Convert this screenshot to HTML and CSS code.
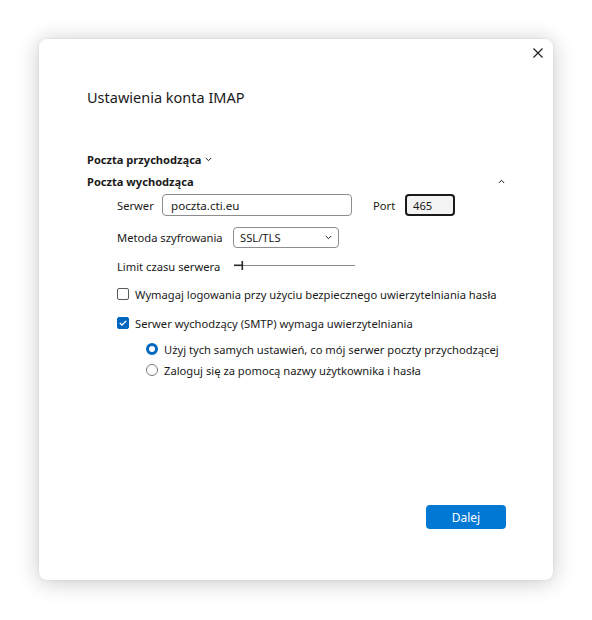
FILE: index.html
```html
<!DOCTYPE html>
<html lang="pl">
<head>
<meta charset="utf-8">
<title>Ustawienia konta IMAP</title>
<link rel="stylesheet" href="styles.css">
</head>
<body>
<div class="dialog">
  <div class="topbar">
    <span class="close" aria-label="Zamknij">
      <svg width="10" height="10" viewBox="0 0 10 10"><path d="M0.5 0.5 L9.5 9.5 M9.5 0.5 L0.5 9.5" stroke="#1a1a1a" stroke-width="1.1" fill="none"/></svg>
    </span>
  </div>
  <h1 class="title">Ustawienia konta IMAP</h1>

  <div class="sec sec-first">
    <span class="sec-label">Poczta przychodząca</span>
    <svg class="chev-down" width="7" height="5" viewBox="0 0 7 5"><path d="M0.8 1 L3.5 3.7 L6.2 1" stroke="#1a1a1a" stroke-width="1" fill="none"/></svg>
  </div>
  <div class="sec sec-second">
    <span class="sec-label">Poczta wychodząca</span>
    <svg class="chev-up" width="7" height="5" viewBox="0 0 7 5"><path d="M0.8 4 L3.5 1.3 L6.2 4" stroke="#1a1a1a" stroke-width="1" fill="none"/></svg>
  </div>

  <div class="fields">
    <div class="row row-server">
      <span class="lbl lbl-server">Serwer</span>
      <span class="input input-server">poczta.cti.eu</span>
      <span class="lbl lbl-port">Port</span>
      <span class="input input-port">465</span>
    </div>
    <div class="row row-method">
      <span class="lbl lbl-method">Metoda szyfrowania</span>
      <span class="select">
        <span>SSL/TLS</span>
        <svg width="7" height="5" viewBox="0 0 7 5"><path d="M0.8 1 L3.5 3.7 L6.2 1" stroke="#1a1a1a" stroke-width="1" fill="none"/></svg>
      </span>
    </div>
    <div class="row row-limit">
      <span class="lbl lbl-limit">Limit czasu serwera</span>
      <svg class="slider" width="121" height="9" viewBox="0 0 121 9"><rect x="0" y="3.5" width="8" height="1.6" fill="#2a2a2a"/><rect x="8" y="4" width="113" height="1" fill="#8a8a8a"/><rect x="7.5" y="0" width="1.6" height="9" fill="#2a2a2a"/></svg>
    </div>
    <label class="row check-row cb1">
      <span class="checkbox"></span>
      <span>Wymagaj logowania przy użyciu bezpiecznego uwierzytelniania hasła</span>
    </label>
    <label class="row check-row cb2">
      <span class="checkbox checked">
        <svg width="8" height="6" viewBox="0 0 8 6"><path d="M0.8 3 L3 5 L7.2 0.9" stroke="#fff" stroke-width="1.3" fill="none"/></svg>
      </span>
      <span>Serwer wychodzący (SMTP) wymaga uwierzytelniania</span>
    </label>
    <label class="row radio-row r1">
      <span class="radio selected"></span>
      <span>Użyj tych samych ustawień, co mój serwer poczty przychodzącej</span>
    </label>
    <label class="row radio-row r2">
      <span class="radio"></span>
      <span>Zaloguj się za pomocą nazwy użytkownika i hasła</span>
    </label>
  </div>

  <div class="footer">
    <button class="btn-primary">Dalej</button>
  </div>
</div>
</body>
</html>
```
FILE: styles.css
```css
* { box-sizing: border-box; }
html, body { margin: 0; padding: 0; }
body {
  width: 592px;
  height: 620px;
  background: #ffffff;
  font-family: "Noto Sans", "Open Sans", sans-serif;
  font-size: 11.2px;
  color: #1a1a1a;
  overflow: hidden;
}
.dialog {
  width: 514px;
  height: 541px;
  margin: 39px 0 0 39px;
  background: #fff;
  border-radius: 8px;
  box-shadow: 0 2px 22px rgba(0,0,0,0.22), 0 0 3px rgba(0,0,0,0.08);
  display: flex;
  flex-direction: column;
  padding: 5px 0 0 48px;
}
.topbar {
  height: 18px;
  display: flex;
  justify-content: flex-end;
  padding-right: 10px;
}
.close {
  width: 10px;
  height: 18px;
  display: flex;
  align-items: center;
}
.close svg { display: block; }
.title {
  margin: 25px 0 0 0;
  height: 20px;
  line-height: 20px;
  font-size: 14.5px;
  font-weight: 400;
}
.sec {
  height: 18px;
  display: flex;
  align-items: center;
  font-weight: 700;
  font-size: 11.1px;
}
.sec-first { margin-top: 43px; }
.sec-second { margin-top: 4px; padding-right: 48px; justify-content: space-between; }
.chev-down { margin-left: 3px; margin-top: 1px; }
.fields { padding-left: 30px; display: flex; flex-direction: column; }
.row { display: flex; align-items: center; }
.row-server { height: 22px; margin-top: 4px; }
.lbl-server { width: 45px; }
.input {
  height: 22px;
  border: 1px solid #8d8d8d;
  border-radius: 4px;
  display: flex;
  align-items: center;
  padding-left: 8px;
}
.input-server { width: 190px; font-size: 11.6px; }
.lbl-port { margin-left: 21px; width: 32px; }
.input-port {
  width: 50px;
  border: 2px solid #1a1a1a;
  background: #f3f3f3;
  padding-left: 6px;
}
.row-method { height: 21px; margin-top: 11px; }
.lbl-method { width: 116px; }
.select {
  width: 106px;
  height: 21px;
  border: 1px solid #8d8d8d;
  border-radius: 4px;
  display: flex;
  align-items: center;
  justify-content: space-between;
  padding: 0 6px 0 6px;
}
.row-limit { height: 18px; margin-top: 9px; }
.lbl-limit { width: 117px; }
.slider { display: block; margin-top: -2px; }
.check-row { height: 18px; gap: 6px; }
.cb1 { margin-top: 10px; }
.cb2 { margin-top: 11px; }
.checkbox {
  width: 12px;
  height: 12px;
  border: 1px solid #5a5a5a;
  border-radius: 2px;
  display: flex;
  align-items: center;
  justify-content: center;
  flex: none;
}
.checkbox.checked { background: #0067c0; border-color: #0067c0; }
.checkbox svg { display: block; }
.radio-row { height: 18px; gap: 6px; padding-left: 29px; }
.r1 { margin-top: 8px; }
.r2 { margin-top: 3px; }
.radio {
  width: 12px;
  height: 12px;
  border-radius: 50%;
  border: 1px solid #7a7a7a;
  flex: none;
}
.radio.selected { border: 3.5px solid #0067c0; background: #fff; }
.footer {
  margin-top: auto;
  display: flex;
  justify-content: flex-end;
  padding: 0 47px 51px 0;
}
.btn-primary {
  width: 80px;
  height: 24px;
  border: none;
  border-radius: 4px;
  background: #0078d4;
  color: #fff;
  font-family: inherit;
  font-size: 12px;
  padding: 0;
}
```
